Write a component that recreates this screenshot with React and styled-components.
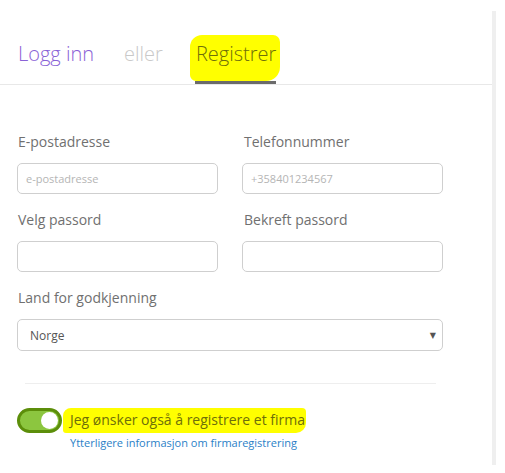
import React from "react";
import styled, { createGlobalStyle } from "styled-components";

const Global = createGlobalStyle`
  html, body { margin: 0; padding: 0; background: #fff; }
  body { font-family: "Open Sans", "Liberation Sans", sans-serif; width: 505px; height: 473px; overflow: hidden; }
  * { box-sizing: border-box; }
`;

const Page = styled.div`
  display: flex;
  width: 505px;
  height: 473px;
`;

const Main = styled.div`
  width: 492px;
  display: flex;
  flex-direction: column;
`;

const ScrollTrack = styled.div`
  width: 4px;
  margin-top: 11px;
  height: 454px;
  background: #efefef;
`;

const Header = styled.div`
  display: flex;
  align-items: flex-end;
  height: 85px;
  border-bottom: 1px solid #e8e8e8;
  padding-left: 18px;
`;

const Tab = styled.div`
  font-size: 20px;
  font-weight: 300;
  line-height: 28px;
  color: ${(p) => p.$color};
  margin-right: ${(p) => p.$gap}px;
  padding-bottom: 16px;
`;

const ActiveTab = styled.div`
  display: flex;
  flex-direction: column;
  margin-left: -6px;
`;

const Marker = styled.div`
  background: #ffff00;
  border-radius: 12px 7px 14px 6px;
  padding: 5px 4px 13px 6px;
  font-size: 20px;
  font-weight: 300;
  line-height: 28px;
  color: #6e6e0a;
`;

const Underline = styled.div`
  height: 3px;
  background: #6b6b6b;
  margin: 0 4px 0 5px;
`;

const Form = styled.div`
  padding: 47px 0 0 17px;
  display: flex;
  flex-direction: column;
`;

const Grid = styled.div`
  display: grid;
  grid-template-columns: 201px 201px;
  column-gap: 24px;
  row-gap: 16px;
`;

const Field = styled.div`
  display: flex;
  flex-direction: column;
`;

const Label = styled.div`
  font-size: 14px;
  line-height: 20px;
  color: #707070;
  padding-left: ${(p) => p.$indent || 1}px;
  margin-bottom: 11px;
`;

const Input = styled.input`
  height: 31px;
  width: 100%;
  border: 1px solid #cfcfcf;
  border-radius: 5px;
  padding: 0 8px;
  font-family: inherit;
  font-size: 11px;
  color: #555;
  outline: none;
  &::placeholder { color: #b5b5b5; }
`;

const FullField = styled(Field)`
  margin-top: 16px;
  width: 426px;
`;

const SelectBox = styled.div`
  height: 32px;
  border: 1px solid #cfcfcf;
  border-radius: 5px;
  display: flex;
  align-items: center;
  justify-content: space-between;
  padding: 0 6px 0 12px;
  font-size: 12px;
  color: #555;
`;

const Arrow = styled.span`
  font-size: 8px;
  color: #555;
  font-family: "DejaVu Sans", sans-serif;
`;

const Divider = styled.hr`
  border: none;
  border-top: 1px solid #eeeeee;
  margin: 32px 0 0 8px;
  width: 411px;
`;

const ToggleRow = styled.div`
  display: flex;
  align-items: center;
  margin-top: 24px;
`;

const Toggle = styled.div`
  width: 45px;
  height: 25px;
  border-radius: 13px;
  border: 3px solid #5c8e0a;
  background: #8cc63f;
  display: flex;
  align-items: center;
  justify-content: flex-end;
  padding-right: 1px;
`;

const Knob = styled.div`
  width: 17px;
  height: 17px;
  border-radius: 50%;
  background: #fff;
`;

const ToggleText = styled.span`
  margin-left: 1px;
  background: #ffff00;
  border-radius: 8px 4px 10px 3px;
  padding: 2px 1px 3px 7px;
  font-size: 14px;
  line-height: 20px;
  color: #6e6e0a;
`;

const InfoLink = styled.a`
  margin: 2px 0 0 53px;
  font-size: 11px;
  line-height: 16px;
  color: #2a7fc7;
  text-decoration: none;
`;

export default function App() {
  return (
    <Page>
      <Global />
      <Main>
        <Header>
          <Tab $color="#8a62d6" $gap={30}>Logg inn</Tab>
          <Tab $color="#c9c9c9" $gap={33}>eller</Tab>
          <ActiveTab>
            <Marker>Registrer</Marker>
            <Underline />
          </ActiveTab>
        </Header>
        <Form>
          <Grid>
            <Field>
              <Label>E-postadresse</Label>
              <Input readOnly placeholder="e-postadresse" />
            </Field>
            <Field>
              <Label $indent={2}>Telefonnummer</Label>
              <Input readOnly placeholder="+358401234567" />
            </Field>
            <Field>
              <Label>Velg passord</Label>
              <Input readOnly type="password" />
            </Field>
            <Field>
              <Label $indent={2}>Bekreft passord</Label>
              <Input readOnly type="password" />
            </Field>
          </Grid>
          <FullField>
            <Label>Land for godkjenning</Label>
            <SelectBox>
              <span>Norge</span>
              <Arrow>▼</Arrow>
            </SelectBox>
          </FullField>
          <Divider />
          <ToggleRow>
            <Toggle><Knob /></Toggle>
            <ToggleText>Jeg ønsker også å registrere et firma</ToggleText>
          </ToggleRow>
          <InfoLink href="#">Ytterligere informasjon om firmaregistrering</InfoLink>
        </Form>
      </Main>
      <ScrollTrack />
    </Page>
  );
}
